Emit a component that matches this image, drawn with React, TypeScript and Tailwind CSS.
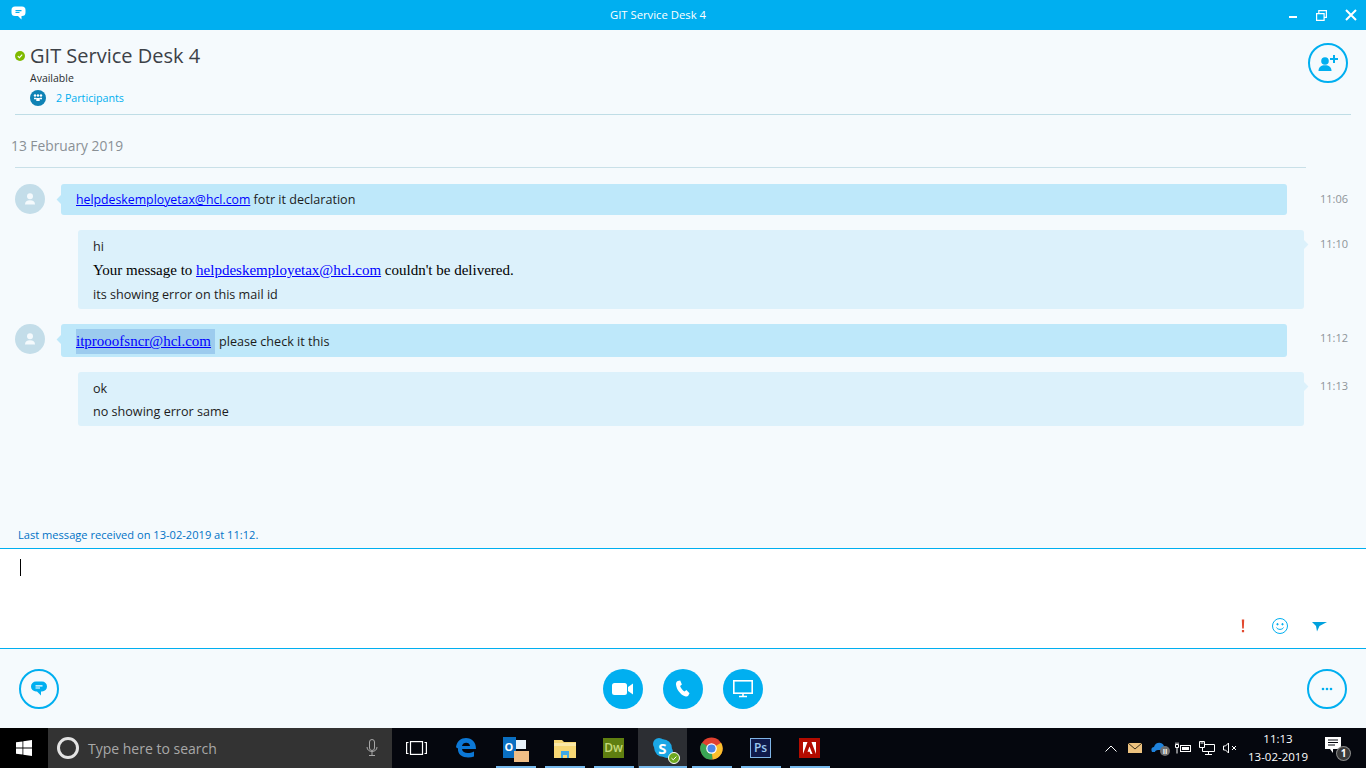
import type { ReactNode } from "react";

const Mail = ({ children, sans = false }: { children: ReactNode; sans?: boolean }) => (
  <a
    href="#"
    className={sans ? "text-[12.3px] text-[#0000ff] underline" : "font-['Liberation_Serif',serif] text-[15px] text-[#0000ff] underline"}
  >
    {children}
  </a>
);

const Avatar = () => (
  <div className="flex h-[30px] w-[30px] shrink-0 items-center justify-center rounded-full bg-[#c3dde9]">
    <svg width="14" height="14" viewBox="0 0 14 14" fill="#f4fafd">
      <circle cx="7" cy="4.2" r="3" />
      <path d="M2 12.5c0-3 2-4.2 5-4.2s5 1.200 5 4.200z" />
    </svg>
  </div>
);

const Incoming = ({ time, h, timePad, children }: { time: string; h: string; timePad: string; children: ReactNode }) => (
  <div className="flex">
    <div className="w-[61px] shrink-0 pl-[15px]">
      <Avatar />
    </div>
    <div className={`relative flex w-[1226px] items-center rounded-[3px] bg-[#bee8fa] pt-[2px] pl-[15px] ${h}`}>
      <div className="absolute top-[12px] left-[-3px] h-[7px] w-[7px] rotate-45 bg-[#bee8fa]" />
      <div className="relative">{children}</div>
    </div>
    <div className={`pl-[33px] text-[11px] leading-4 text-[#8d9499] ${timePad}`}>{time}</div>
  </div>
);

const Outgoing = ({ time, children }: { time: string; children: ReactNode }) => (
  <div className="flex">
    <div className="w-[78px] shrink-0" />
    <div className="relative w-[1226px] rounded-[3px] bg-[#dcf1fb] py-[4px] pl-[15px]">
      <div className="absolute top-[11px] right-[-3px] h-[7px] w-[7px] rotate-45 bg-[#dcf1fb]" />
      <div className="relative">{children}</div>
    </div>
    <div className="pt-[6px] pl-[16px] text-[11px] leading-4 text-[#8d9499]">{time}</div>
  </div>
);

const RoundButton = ({ children }: { children: ReactNode }) => (
  <button className="flex h-10 w-10 items-center justify-center rounded-full border-2 border-[#00aff0]">
    {children}
  </button>
);

const CallButton = ({ children }: { children: ReactNode }) => (
  <button className="flex h-10 w-10 items-center justify-center rounded-full bg-[#00aff0]">{children}</button>
);

const TaskIcon = ({ w = "w-[49px]", open = true, active = false, children }: { w?: string; open?: boolean; active?: boolean; children: ReactNode }) => (
  <div className={`relative flex h-10 shrink-0 items-center justify-center ${w} ${active ? "bg-[#2c2e33]" : ""}`}>
    {children}
    {open && <div className={`absolute bottom-0 h-[2px] bg-[#76b9ed] ${active ? "right-0 left-[1px]" : "right-[4px] left-[5px]"}`} />}
  </div>
);

export default function App() {
  return (
    <div className="flex h-[768px] w-[1366px] flex-col overflow-hidden bg-[#f5fafd] font-['Open_Sans','Noto_Sans',sans-serif] text-[12.6px] text-[#1c1c1c]">
      {/* title bar */}
      <div className="relative flex h-[30px] shrink-0 items-center justify-center bg-[#00aff0] pr-[50px] text-[11.3px] text-white">
        <svg className="absolute top-[6px] left-[11px]" width="15" height="15" viewBox="0 0 15 15" fill="#fff">
          <path d="M4 .5h7a3.500 3.500 0 0 1 3.500 3.500v2.500a3.500 3.500 0 0 1-3.500 3.500h-.5v3.500L7 10H4A3.500 3.500 0 0 1 .5 6.500V4A3.500 3.500 0 0 1 4 .5z" />
          <path d="M4.500 4h6v1.200h-6zM4.500 6h4v1.100h-4z" fill="#00aff0" />
        </svg>
        GIT Service Desk 4
        <div className="absolute top-0 right-[9px] flex h-[30px] items-center gap-[18px]">
          <svg width="10" height="10" viewBox="0 0 10 10" fill="#fff"><rect x="1" y="6" width="8" height="2" /></svg>
          <svg width="11" height="11" viewBox="0 0 11 11" fill="none" stroke="#fff" strokeWidth="1.200">
            <path d="M.6 3.600h7.500v6.800H.6zM2.800 3.500V.6h7.600v6.700H8.200" />
          </svg>
          <svg width="12" height="12" viewBox="0 0 12 12" stroke="#fff" strokeWidth="2"><path d="M1 1l10 10M11 1L1 11" /></svg>
        </div>
      </div>

      {/* conversation header */}
      <div className="relative mx-[15px] h-[85px] shrink-0 border-b border-[#bfdde6]">
        <div className="flex items-center pt-[12px]">
          <svg className="mr-[5px]" width="10" height="10" viewBox="0 0 10 10">
            <circle cx="5" cy="5" r="5" fill="#7fba00" />
            <path d="M2.800 5.200l1.600 1.500 2.800-3" fill="none" stroke="#fff" strokeWidth="1.100" />
          </svg>
          <div className="text-[20px] leading-7 text-[#3c4147]">GIT Service Desk 4</div>
        </div>
        <div className="ml-[15px] text-[10.5px] leading-4 text-[#2a2d30]">Available</div>
        <div className="mt-[4px] ml-[15px] flex items-center">
          <div className="flex h-4 w-4 items-center justify-center rounded-full bg-[#0f82b5]">
            <svg width="10" height="8" viewBox="0 0 10 8" fill="#fff">
              <circle cx="2" cy="1.500" r="1.200" />
              <circle cx="5" cy="1.500" r="1.200" />
              <circle cx="8" cy="1.500" r="1.200" />
              <path d="M1 3.800h2.200v1.400H1zM6.800 3.800H9v1.400H6.800zM3.300 4h3.400v3H3.300z" />
            </svg>
          </div>
          <span className="ml-[10px] text-[10.7px] leading-4 text-[#00aff0]">2 Participants</span>
        </div>
        <div className="absolute top-[13px] right-[3px]">
          <RoundButton>
            <svg width="22" height="18" viewBox="0 0 22 18" fill="#00aff0">
              <circle cx="8" cy="7" r="3.800" />
              <path d="M1.500 17c0-4 2.500-5.800 6.500-5.800s6.500 1.800 6.500 5.800z" />
              <path d="M16 1h2v3h3v2h-3v3h-2V6h-3V4h3z" />
            </svg>
          </RoundButton>
        </div>
      </div>

      {/* date */}
      <div className="mr-[60px] ml-[15px] h-[53px] shrink-0 border-b border-[#c9e0e8] pt-[21px] text-[13.8px] leading-5 text-[#8a9095]">
        <span className="-ml-[4px]">13 February 2019</span>
      </div>

      {/* messages */}
      <div className="flex h-[380px] shrink-0 flex-col pt-[16px]">
        <div className="flex flex-col gap-[15px]">
          <Incoming time="11:06" h="h-[31px]" timePad="pt-[7px]">
            <Mail sans>helpdeskemployetax@hcl.com</Mail> fotr it declaration
          </Incoming>
          <Outgoing time="11:10">
            <div className="h-[24px] leading-[26px]">hi</div>
            <div className="h-[24px] font-['Liberation_Serif',serif] text-[15px] leading-[24px] text-black">
              Your message to <Mail>helpdeskemployetax@hcl.com</Mail> couldn't be delivered.
            </div>
            <div className="h-[23px] leading-[26px]">its showing error on this mail id</div>
          </Outgoing>
          <Incoming time="11:12" h="h-[33px]" timePad="pt-[6px]">
            <span className="bg-[#9ccbee] py-[4px] pr-[4px]">
              <Mail>itprooofsncr@hcl.com</Mail>
            </span>
            <span className="ml-[4px]">please check it this</span>
          </Incoming>
          <Outgoing time="11:13">
            <div className="h-[24px] leading-[26px]">ok</div>
            <div className="h-[22px] leading-[24px]">no showing error same</div>
          </Outgoing>
        </div>
        <div className="mt-auto pb-[5px] pl-[18px] text-[11.1px] leading-4 text-[#0072c6]">
          Last message received on 13-02-2019 at 11:12.
        </div>
      </div>

      {/* compose box */}
      <div className="relative h-[101px] shrink-0 border-y border-y-[#00aff0] bg-white">
        <div className="absolute top-[10px] left-[20px] h-[17px] w-px bg-black" />
        <div className="absolute right-[39px] bottom-[14px] flex items-center">
          <svg width="16" height="16" viewBox="0 0 16 16" fill="#e2492f">
            <path d="M6.800 1.500h2.400l-.4 9H7.200zM6.900 12h2.200v2.200H6.900z" />
          </svg>
          <svg className="ml-[21px]" width="16" height="16" viewBox="0 0 16 16" fill="none" stroke="#00aff0" strokeWidth="1">
            <circle cx="8" cy="8" r="7.500" />
            <circle cx="5.500" cy="6.200" r=".7" fill="#00aff0" />
            <circle cx="10.500" cy="6.200" r=".7" fill="#00aff0" />
            <path d="M4.500 9.500c1 2.500 6 2.500 7 0" />
          </svg>
          <svg width="15" height="11" viewBox="0 0 15 11" fill="#00a1dd" className="ml-[24px]">
            <path d="M0 1h15L7.500 5 5 10.500 4 5z" />
          </svg>
        </div>
      </div>

      {/* call bar */}
      <div className="flex h-[79px] shrink-0 items-center justify-between px-[19px]">
        <RoundButton>
          <svg width="18" height="18" viewBox="0 0 18 18" fill="#00aff0">
            <path d="M6 1.500h6A5 5 0 0 1 17 6.500a5 5 0 0 1-5 5h-1v4l-4-4H6a5 5 0 0 1-5-5 5 5 0 0 1 5-5z" />
            <path d="M5.500 5.200h7v1.200h-7zM5.500 7.400h4.500v1.100H5.500z" fill="#fff" />
          </svg>
        </RoundButton>
        <div className="flex gap-5">
          <CallButton>
            <svg width="22" height="14" viewBox="0 0 22 14" fill="#fff">
              <rect x="0" y="1" width="15" height="12" rx="2.500" />
              <path d="M16 5l5-3.500v11L16 9z" />
            </svg>
          </CallButton>
          <CallButton>
            <svg width="18" height="18" viewBox="0 0 18 18" fill="#fff">
              <path d="M3.800 1l2.400-.6 1.700 4-1.800 1.500c.6 2 2.400 4.300 4.400 5.500l1.900-1.300 3.100 3.100-1.300 2.600c-.5.700-1.800 1-3.200.5C6.200 14.500 2.500 9.500 2 4.500 1.900 2.800 2.600 1.500 3.800 1z" />
            </svg>
          </CallButton>
          <CallButton>
            <svg width="20" height="18" viewBox="0 0 20 18" fill="none" stroke="#fff" strokeWidth="1.600">
              <rect x=".8" y=".8" width="18.400" height="12.400" />
              <path d="M10 13v3M6 16.500h8" />
            </svg>
          </CallButton>
        </div>
        <RoundButton>
          <svg width="12" height="4" viewBox="0 0 12 4" fill="#00aff0">
            <circle cx="2" cy="2" r="1.300" />
            <circle cx="6" cy="2" r="1.300" />
            <circle cx="10" cy="2" r="1.300" />
          </svg>
        </RoundButton>
      </div>

      {/* taskbar */}
      <div className="flex h-10 shrink-0 items-center bg-[#05070e] text-white">
        <div className="flex h-10 w-12 shrink-0 items-center justify-center bg-black">
          <svg width="16" height="16" viewBox="0 0 16 16" fill="#fff">
            <path d="M0 2.300l6.500-.9v6.200H0zM7.300 1.300L16 0v7.600H7.300zM0 8.400h6.500v6.200L0 13.700zM7.300 8.400H16V16l-8.700-1.200z" />
          </svg>
        </div>
        <div className="flex h-10 w-[344px] shrink-0 items-center bg-[#333333] pl-[9px] text-[14px] text-[#a8a8a8]">
          <div className="h-[22px] w-[22px] rounded-full border-[3px] border-[#e3e3e3]" />
          <span className="ml-[9px]">Type here to search</span>
          <svg className="mr-[14px] ml-auto" width="12" height="18" viewBox="0 0 12 18" fill="none" stroke="#a8a8a8" strokeWidth="1">
            <rect x="3.500" y=".5" width="5" height="11" rx="2.500" />
            <path d="M1 8c0 6 10 6 10 0M6 13v3M3 16.500h6" />
          </svg>
        </div>
        <TaskIcon open={false}>
          <svg width="21" height="14" viewBox="0 0 21 14" fill="none" stroke="#fff" strokeWidth="1.200">
            <rect x="4.500" y=".6" width="12" height="12.800" />
            <path d="M2.500 1.500H.6v11h1.900M18.500 1.500h1.900v11h-1.900" />
          </svg>
        </TaskIcon>
        <TaskIcon w="w-[50px]" open={false}>
          <svg width="22" height="22" viewBox="0 0 22 22" fill="#0c78d6">
            <path d="M1 10C2 4 6 1 11 1c6 0 10 4 10 11H7c.3 4 6 5.500 12 2.500v5C12 22 2 20 3 11c-.2.300-1 .6-2-1zM7 9h8c0-4.500-7.500-4.500-8 0z" />
          </svg>
        </TaskIcon>
        <TaskIcon>
          <div className="relative h-[24px] w-[26px]">
            <div className="absolute top-[1px] left-0 flex h-[21px] w-[13px] items-center justify-center bg-[#0a6fc2] text-[11px] font-bold text-white">O</div>
            <div className="absolute top-[4px] left-[13px] h-[9px] w-[10px] bg-[#e8f2fa]" />
            <div className="absolute right-0 bottom-[-2px] h-[11px] w-[15px] bg-[#efbd85]" />
          </div>
        </TaskIcon>
        <TaskIcon>
          <svg width="22" height="20" viewBox="0 0 22 20">
            <path d="M0 2h8l2 2h12v16H0z" fill="#f7d774" />
            <path d="M0 5h22v3H0z" fill="#fbe8a6" />
            <path d="M7 13h8v7h-2v-3H9v3H7z" fill="#3fa9e8" />
          </svg>
        </TaskIcon>
        <TaskIcon>
          <div className="flex h-[20px] w-[21px] items-center justify-center bg-[#5f7f10] text-[12px] font-semibold text-[#c6db7c]">Dw</div>
        </TaskIcon>
        <TaskIcon active>
          <div className="relative">
            <svg width="22" height="22" viewBox="0 0 22 22">
              <circle cx="7" cy="7" r="6" fill="#1ba7e6" />
              <circle cx="15" cy="15" r="6" fill="#1ba7e6" />
              <circle cx="11" cy="11" r="8.800" fill="#1ba7e6" />
            </svg>
            <span className="absolute inset-0 flex items-center justify-center text-[15px] font-bold text-white">S</span>
            <svg className="absolute right-[-6px] bottom-[-5px]" width="12" height="12" viewBox="0 0 12 12">
              <circle cx="6" cy="6" r="5.500" fill="#6ea820" stroke="#fff" />
              <path d="M3.500 6.200l1.800 1.600 3-3.200" fill="none" stroke="#fff" />
            </svg>
          </div>
        </TaskIcon>
        <TaskIcon>
          <svg width="23" height="23" viewBox="0 0 48 48">
            <circle cx="24" cy="24" r="23" fill="#e0402f" />
            <path d="M24 24L44 12A23 23 0 0 1 26 47z" fill="#fbc02d" />
            <path d="M24 24L26 47A23 23 0 0 1 4 12z" fill="#3aa655" />
            <circle cx="24" cy="24" r="11" fill="#fff" />
            <circle cx="24" cy="24" r="8.500" fill="#4a86e8" />
          </svg>
        </TaskIcon>
        <TaskIcon>
          <div className="flex h-[20px] w-[21px] items-center justify-center border border-[#7fb4e6] bg-[#0f1a4b] text-[12px] font-semibold text-[#9cc8f0]">Ps</div>
        </TaskIcon>
        <TaskIcon>
          <div className="flex h-[20px] w-[21px] items-center justify-center bg-[#b30b00]">
            <svg width="13" height="12" viewBox="0 0 13 12" fill="#fff"><path d="M4.500 0H0v12zM8.500 0H13v12zM6.500 4.500L9.500 12H7.500L6.600 9.800H4.500z" /></svg>
          </div>
        </TaskIcon>

        <div className="ml-auto flex h-10 items-center">
          <svg className="mr-[11px]" width="12" height="7" viewBox="0 0 12 7" fill="none" stroke="#fff" strokeWidth="1"><path d="M.5 6.500L6 1l5.500 5.500" /></svg>
          <svg className="mr-[9px]" width="14" height="10" viewBox="0 0 14 10">
            <rect width="14" height="10" fill="#edc27f" />
            <path d="M0 0l7 6 7-6" fill="none" stroke="#3b2f1a" strokeWidth="1" />
          </svg>
          <div className="relative mr-[8px] h-[14px] w-[16px]">
            <svg width="16" height="12" viewBox="0 0 16 12" fill="#1e82dc"><path d="M1 11c-1.500-3 0-5 2-5 1-5 8-6 10-1 2 0 3 2 3 4H7c-2 0-3 1-3 2z" /></svg>
            <div className="absolute right-[-3px] bottom-[-1px] flex h-[10px] w-[10px] items-center justify-center rounded-full bg-[#6f6f6f] text-[7px] leading-none font-bold">II</div>
          </div>
          <svg className="mr-[8px]" width="16" height="13" viewBox="0 0 16 13" fill="none" stroke="#fff">
            <path d="M.5 2.500h3v3h-3zM2 5.500v6M1 .5v2M3 .5v2" />
            <rect x="5.500" y="3.500" width="10" height="6" />
            <rect x="7" y="5" width="7" height="3" fill="#fff" stroke="none" />
          </svg>
          <svg className="mr-[8px]" width="16" height="14" viewBox="0 0 16 14" fill="none" stroke="#fff">
            <path d="M3.500 3.500h12v7h-12zM9.500 10.500v3M6 13.500h7" />
            <path d="M.5.500h5v6h-5z" fill="#05070e" />
            <path d="M1.500 2h3" />
          </svg>
          <svg className="mr-[9px]" width="14" height="12" viewBox="0 0 14 12" fill="none" stroke="#fff">
            <path d="M.5 4v4h2l3 3V1l-3 3zM9 4l4 4M13 4l-4 4" />
          </svg>
          <div className="mr-[15px] flex w-[64px] flex-col items-center text-[11.5px] leading-[18px]">
            <span>11:13</span>
            <span>13-02-2019</span>
          </div>
          <div className="relative mr-[17px] h-[24px] w-[24px]">
            <svg className="absolute top-[1px] left-0" width="16" height="17" viewBox="0 0 16 17" fill="#fff">
              <path d="M0 0h16v12H8v4l-3-4H0z" />
              <path d="M3 3h10M3 5.500h10M3 8h7" stroke="#05070e" />
            </svg>
            <div className="absolute right-[-2px] bottom-[-1px] flex h-[15px] w-[15px] items-center justify-center rounded-full border border-white/40 bg-[#3a3a3a] text-[10px] font-bold">1</div>
          </div>
        </div>
      </div>
    </div>
  );
}
